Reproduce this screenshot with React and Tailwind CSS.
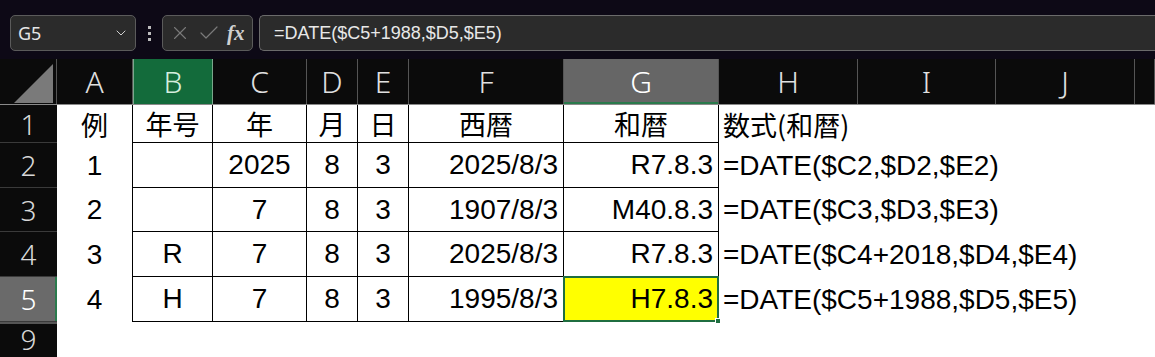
import React from "react";
import { ChevronDown, X, Check } from "lucide-react";

const cols = ["A", "B", "C", "D", "E", "F", "G", "H", "I", "J", ""];

const rows = [
  { n: "1", h: "h-[38px]", cells: ["例", "年号", "年", "月", "日", "西暦", "和暦", "数式(和暦)"], head: true },
  { n: "2", h: "h-[45px]", cells: ["1", "", "2025", "8", "3", "2025/8/3", "R7.8.3", "=DATE($C2,$D2,$E2)"] },
  { n: "3", h: "h-[44px]", cells: ["2", "", "7", "8", "3", "1907/8/3", "M40.8.3", "=DATE($C3,$D3,$E3)"] },
  { n: "4", h: "h-[45px]", cells: ["3", "R", "7", "8", "3", "2025/8/3", "R7.8.3", "=DATE($C4+2018,$D4,$E4)"] },
  { n: "5", h: "h-[45px]", cells: ["4", "H", "7", "8", "3", "1995/8/3", "H7.8.3", "=DATE($C5+1988,$D5,$E5)"], sel: true },
];

const grid =
  "grid grid-cols-[57px_76px_80px_94px_51px_51px_155px_155px_139px_138px_139px_1fr]";

const cellFont = { fontFamily: '"Liberation Sans", "Noto Sans CJK JP", Arial, sans-serif' };
const jpFont = { fontFamily: '"Noto Sans CJK JP", "Liberation Sans", sans-serif' };
const uiFont = { fontFamily: '"Noto Sans", "Open Sans", sans-serif' };

function Cell({ col, text, row }) {
  // col index 0..7 => A..H
  const bordered = col >= 1 && col <= 6;
  let cls = "flex items-center whitespace-nowrap text-black leading-none ";
  cls += row.head ? "text-[27px] " : "text-[28px] ";
  if (col === 0) cls += "justify-center border-r border-black ";
  if (bordered) cls += "border-r border-b border-black ";
  if (col >= 1 && col <= 4) cls += "justify-center ";
  if (col === 5 || col === 6) cls += row.head ? "justify-center " : "justify-end pr-[5px] ";
  if (col === 7) cls += "pl-[4px] overflow-visible z-10 ";
  const selected = row.sel && col === 6;
  if (selected) cls += "bg-[#ffff00] relative ";
  return (
    <div className={cls} style={row.head ? jpFont : cellFont}>
      {text}
      {selected && (
        <>
          <div className="absolute -left-[1px] -top-[1px] -right-[1px] -bottom-[1px] border-2 border-[#1f6e40]" />
          <div className="absolute -right-[3px] -bottom-[3px] w-[6px] h-[6px] bg-[#1f6e40] border border-white" />
        </>
      )}
    </div>
  );
}

export default function App() {
  return (
    <div className="w-[1155px] h-[357px] overflow-hidden bg-white">
      {/* formula bar */}
      <div className="h-[59px] bg-[#0d0916] flex items-start pt-[15px]">
        <div className="ml-[10px] w-[126px] h-[36px] rounded-[5px] border border-[#5b5b5b] bg-[#2b2b2b] flex items-center justify-between pl-[7px] pr-[6px]">
          <span className="text-[#e6e6e6] text-[18px]" style={uiFont}>G5</span>
          <ChevronDown size={16} strokeWidth={1.5} className="text-[#cfcfcf]" />
        </div>
        <div className="w-[26px] h-[36px] flex flex-col items-center justify-center gap-[3px]">
          <span className="w-[3px] h-[3px] bg-[#bdbdbd]" />
          <span className="w-[3px] h-[3px] bg-[#bdbdbd]" />
          <span className="w-[3px] h-[3px] bg-[#bdbdbd]" />
        </div>
        <div className="w-[91px] h-[36px] rounded-[5px] border border-[#5b5b5b] bg-[#2b2b2b] flex items-center pl-[6px]">
          <X size={22} strokeWidth={1.2} className="text-[#7a7a7a]" />
          <Check size={24} strokeWidth={1.2} className="text-[#7a7a7a] ml-[6px]" />
          <span
            className="ml-[6px] text-[#d0d0d0] text-[21px] italic font-bold leading-none"
            style={{ fontFamily: '"Liberation Serif", "DejaVu Serif", serif' }}
          >
            fx
          </span>
        </div>
        <div className="ml-[6px] flex-1 h-[36px] rounded-l-[5px] border border-r-0 border-[#6b6b6b] bg-[#2b2b2b] flex items-center pl-[14px]">
          <span className="text-[#e8e8e8] text-[18px]" style={cellFont}>=DATE($C5+1988,$D5,$E5)</span>
        </div>
      </div>

      {/* column headers */}
      <div className={`${grid} h-[46px] bg-[#0b0b0b] border-b border-[#8a8a8a]`}>
        <div className="relative border-r border-[#555]">
          <svg width="57" height="46" className="absolute left-0 top-0">
            <polygon points="14,44 53,5 53,44" fill="#7a7a7a" />
          </svg>
        </div>
        {cols.map((c, i) => {
          let cls = "flex items-center justify-center text-[30px] font-light leading-none border-r ";
          if (c === "B") cls += "bg-[#136b3b] text-[#d6eede] border-[#7aa88c] border-l ";
          else if (c === "G") cls += "bg-[#666666] text-white border-[#555] shadow-[inset_0_-2px_0_#2a7a4c] ";
          else cls += "text-[#e0e0e0] border-[#555] ";
          return (
            <div key={i} className={cls} style={uiFont}>
              {c}
            </div>
          );
        })}
      </div>

      {/* rows */}
      {rows.map((r) => (
        <div key={r.n} className={`${grid} ${r.h}`}>
          <div
            className={`flex items-center justify-center text-[28px] font-light leading-none border-b border-[#3a3a3a] ${
              r.sel
                ? "bg-[#6a6a6a] text-white shadow-[inset_-2px_0_0_#2a7a4c]"
                : "bg-[#0b0b0b] text-[#d8d8d8]"
            }`}
            style={uiFont}
          >
            {r.n}
          </div>
          {r.cells.map((t, i) => (
            <Cell key={i} col={i} text={t} row={r} />
          ))}
          <div />
          <div />
          <div />
        </div>
      ))}
      <div className={`${grid} h-[40px]`}>
        <div
          className="flex items-start justify-center pt-[1px] text-[28px] font-light leading-none bg-[#0b0b0b] text-[#d8d8d8] border-t-2 border-[#555]"
          style={uiFont}
        >
          9
        </div>
      </div>
    </div>
  );
}
